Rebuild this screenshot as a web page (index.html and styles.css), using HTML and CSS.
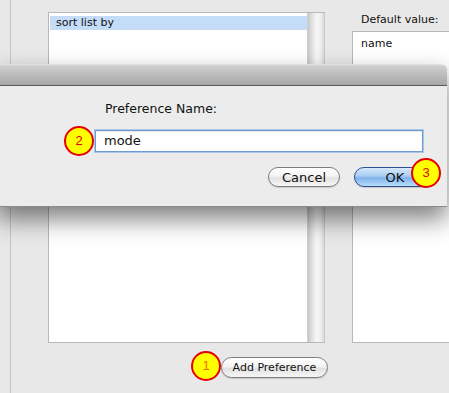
FILE: index.html
```html
<!DOCTYPE html>
<html>
<head>
<meta charset="utf-8">
<link rel="stylesheet" href="styles.css">
</head>
<body>
<div class="window">
  <div class="pane">
    <div class="lists">
      <div class="listbox">
        <div class="rows">
          <div class="row selected">sort list by</div>
        </div>
        <div class="scrollbar"></div>
      </div>
      <div class="right">
        <div class="label">Default value:</div>
        <div class="valuebox">name</div>
      </div>
    </div>
    <div class="actions">
      <button class="btn add">Add Preference</button>
    </div>
  </div>

  <div class="dialog">
    <div class="titlebar"></div>
    <div class="dbody">
      <div class="prompt">Preference Name:</div>
      <div class="field">mode</div>
      <div class="buttons">
        <button class="btn cancel">Cancel</button>
        <button class="btn ok">OK</button>
      </div>
    </div>
  </div>

  <div class="callout c1">1</div>
  <div class="callout c2">2</div>
  <div class="callout c3">3</div>
</div>
</body>
</html>
```
FILE: styles.css
```css
html, body {
  margin: 0;
  padding: 0;
  background: #e8e8e8;
  font-family: "DejaVu Sans", "Lucida Grande", sans-serif;
  color: #111;
  overflow: hidden;
}
.window {
  position: relative;
  width: 449px;
  height: 393px;
  overflow: hidden;
}
.pane {
  margin-left: 10px;
  border-left: 1px solid #c4c4c4;
  height: 393px;
  padding: 12px 0 0 37px;
  box-sizing: border-box;
}
.lists {
  display: flex;
  gap: 27px;
}
.listbox {
  width: 277px;
  height: 331px;
  box-sizing: border-box;
  border: 1px solid #b8b8b8;
  border-right-color: #c8c8c8;
  background: #fff;
  display: flex;
}
.rows {
  flex: 1;
  padding-top: 3px;
}
.row {
  height: 14px;
  font-size: 11px;
  line-height: 14px;
  padding-left: 6px;
  margin-left: 1px;
}
.row.selected {
  background: #c5dcf8;
}
.scrollbar {
  width: 16px;
  background: linear-gradient(to right, #c6c6c6 0%, #e2e2e2 25%, #f7f7f7 55%, #eeeeee 80%, #d8d8d8 100%);
  border-left: 1px solid #cfcfcf;
}
.right {
  flex: 1;
  display: flex;
  flex-direction: column;
}
.label {
  font-size: 11px;
  height: 18px;
  line-height: 14px;
  padding-left: 9px;
  padding-top: 1px;
}
.valuebox {
  height: 312px;
  box-sizing: border-box;
  border: 1px solid #b8b8b8;
  border-right: none;
  background: #fff;
  font-size: 11px;
  padding: 5px 0 0 8px;
}
.actions {
  display: flex;
  padding: 14px 0 0 173px;
}
.btn {
  font-family: "DejaVu Sans", "Lucida Grande", sans-serif;
  color: #111;
  border: 1px solid #7d7d7d;
  border-radius: 11px;
  background: linear-gradient(to bottom, #ffffff 0%, #f4f4f4 45%, #e2e2e2 55%, #f6f6f6 100%);
  padding: 0;
  margin: 0;
  box-shadow: 0 1px 1px rgba(0,0,0,0.15);
}
.btn.add {
  width: 107px;
  height: 21px;
  font-size: 11px;
}
.dialog {
  position: absolute;
  left: -4px;
  top: 64px;
  width: 451px;
  height: 143px;
  background: #ececec;
  border-radius: 0 6px 0 0;
  border-bottom: 1px solid #8a8a8a;
  box-shadow: 0 12px 24px rgba(0,0,0,0.5);
  box-sizing: border-box;
}
.titlebar {
  height: 22px;
  background: linear-gradient(to bottom, #e6e6e6 0%, #cfcfcf 10%, #b8b8b8 60%, #a8a8a8 100%);
  border-bottom: 1px solid #5a5a5a;
  border-radius: 0 6px 0 0;
  box-sizing: border-box;
}
.dbody {
  padding: 15px 0 0 99px;
}
.prompt {
  font-size: 12.5px;
  padding-left: 10px;
  height: 29px;
  line-height: 16px;
}
.field {
  width: 328px;
  height: 22px;
  box-sizing: border-box;
  background: #fff;
  border: 1px solid #6f9bd3;
  box-shadow: 0 0 0 1px #a9c7ea, inset 0 1px 1px rgba(0,0,0,0.1);
  font-size: 13px;
  line-height: 20px;
  padding-left: 8px;
}
.buttons {
  display: flex;
  gap: 14px;
  padding: 15px 0 0 173px;
}
.btn.cancel {
  width: 72px;
  height: 20px;
  font-size: 13px;
}
.btn.ok {
  width: 82px;
  height: 20px;
  font-size: 13px;
  border-color: #2d4f8f;
  background: linear-gradient(to bottom, #d7e8fa 0%, #a8cdf2 45%, #7fb3ea 55%, #b8ddfb 100%);
}
.callout {
  position: absolute;
  width: 26px;
  height: 26px;
  border-radius: 50%;
  background: #ffff00;
  border: 2px solid #e80000;
  font-family: "Liberation Sans", Arial, sans-serif;
  font-size: 13px;
  line-height: 26px;
  text-align: center;
  color: #e80000;
}
.c1 { left: 191px; top: 351px; color: #f07000; }
.c2 { left: 64px; top: 126px; }
.c3 { left: 411px; top: 158px; }
```
